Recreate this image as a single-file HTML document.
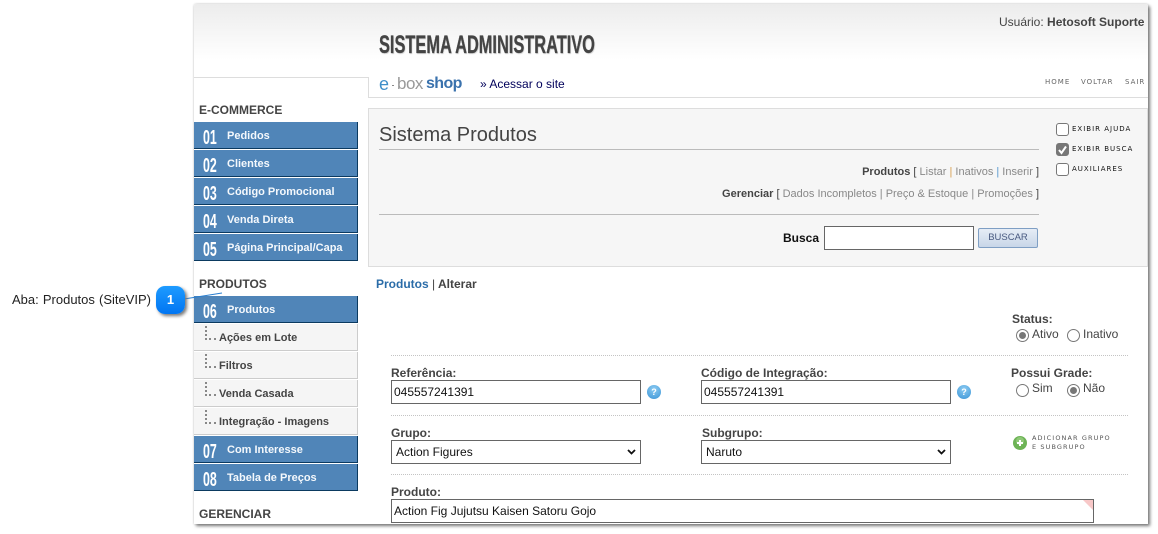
<!DOCTYPE html>
<html><head><meta charset="utf-8">
<style>
html,body{margin:0;padding:0;width:1158px;height:534px;overflow:hidden;background:#fff;font-family:"Liberation Sans",sans-serif;}
.a{position:absolute;}
.t{position:absolute;line-height:14px;white-space:nowrap;font-size:12px;color:#444;}
.b{font-weight:bold;}
.m{position:absolute;left:0;width:163px;height:26px;background:#5085b8;border-bottom:1px solid #0b3a60;border-right:1px solid #0b3a60;}
.m .n{position:absolute;left:9px;top:6px;font-size:20px;line-height:20px;font-weight:bold;color:#fff;transform:scaleX(.62);transform-origin:0 0;}
.m .l{position:absolute;left:33px;top:7px;font-size:11px;line-height:14px;font-weight:bold;color:#f4f8fc;white-space:nowrap;}
.s{position:absolute;left:0;width:163px;height:26px;background:#f5f5f5;border-bottom:1px solid #ccc;border-right:1px solid #ccc;}
.s .l{position:absolute;left:25px;top:7px;font-size:11px;line-height:14px;font-weight:bold;color:#444;white-space:nowrap;}
.s i{position:absolute;left:11px;top:2px;height:14px;border-left:2px dotted #888;}
.s u{position:absolute;left:15px;top:14px;width:7px;border-top:2px dotted #888;}
.h{position:absolute;left:5px;font-size:12px;line-height:14px;font-weight:bold;color:#444;}
.in{position:absolute;box-sizing:border-box;height:24px;border:1px solid #666;background:#fff;font-size:12px;line-height:22px;color:#111;padding-left:2px;white-space:nowrap;}
.dot{position:absolute;left:391px;width:737px;border-top:1px dotted #c4c4c4;}
.px{position:absolute;font-family:"DejaVu Sans",sans-serif;font-size:7px;line-height:9px;white-space:nowrap;letter-spacing:1px;}
.cb{position:absolute;left:1056px;width:13px;height:13px;box-sizing:border-box;border:1px solid #777;border-radius:3px;background:#fff;}
.r{position:absolute;width:13px;height:13px;box-sizing:border-box;border:1px solid #777;border-radius:50%;background:#fff;}
.r.on::after{content:"";position:absolute;left:2px;top:2px;width:7px;height:7px;border-radius:50%;background:#777;}
.help{position:absolute;width:14px;height:14px;border-radius:50%;background:radial-gradient(circle at 50% 30%,#8ccbf2,#3a94d6);color:#fff;font-size:9px;font-weight:bold;line-height:14px;text-align:center;}
.ar{position:absolute;width:9px;height:6px;}
</style></head>
<body>
<div class="a" style="left:194px;top:4px;width:954px;height:520px;background:#fff;box-shadow:2px 2px 3px #777,0 0 2px #ccc;border-radius:2px 2px 0 0;overflow:hidden;">
  <div class="a" style="left:0;top:0;width:954px;height:56px;background:linear-gradient(#ececec,#fff);"></div>
</div>

<div class="t b" style="left:379px;top:33px;font-size:25px;line-height:25px;color:#444;transform:scaleX(.655);transform-origin:0 0;text-shadow:1px 1px 1px #ccc;-webkit-text-stroke:.3px #444;">SISTEMA ADMINISTRATIVO</div>
<div class="t" style="left:999px;top:15px;color:#444;">Usuário: <span class="b">Hetosoft Suporte</span></div>

<div class="a" style="left:194px;top:77px;width:175px;height:1px;background:#ddd;"></div>
<div class="a" style="left:368px;top:77px;width:1px;height:21px;background:#ddd;"></div>
<div class="a" style="left:368px;top:97px;width:780px;height:1px;background:#ddd;"></div>

<div class="t" style="left:379px;top:75px;font-size:18px;line-height:18px;color:#3f8fc9;">e</div>
<div class="a" style="left:392px;top:85px;width:2px;height:1px;background:#888;"></div>
<div class="t" style="left:397px;top:75px;font-size:17px;line-height:18px;color:#999;letter-spacing:-.5px;">box</div>
<div class="t b" style="left:426px;top:75px;font-size:16px;line-height:18px;color:#3a72ad;letter-spacing:-.6px;">shop</div>
<div class="t" style="left:480px;top:77px;color:#00005a;">» Acessar o site</div>

<div class="px" style="left:1045px;top:78px;color:#666;">HOME</div>
<div class="px" style="left:1081px;top:78px;color:#666;">VOLTAR</div>
<div class="px" style="left:1125px;top:78px;color:#666;">SAIR</div>

<div class="a" style="left:368px;top:108px;width:778px;height:157px;background:#f6f6f6;border:1px solid #ddd;"></div>
<div class="t" style="left:379px;top:123px;font-size:20px;line-height:24px;color:#444;">Sistema Produtos</div>
<div class="a" style="left:379px;top:149px;width:660px;height:1px;background:#bbb;"></div>
<div class="a" style="left:379px;top:214px;width:660px;height:1px;background:#bbb;"></div>
<div class="t" style="right:119px;top:165px;font-size:11px;color:#888;"><span class="b" style="color:#444;">Produtos</span> <span style="color:#444;">[</span> Listar <span style="color:#d8a050;">|</span> Inativos <span style="color:#5a9ad0;">|</span> Inserir <span style="color:#444;">]</span></div>
<div class="t" style="right:119px;top:187px;font-size:11px;color:#888;"><span class="b" style="color:#444;">Gerenciar</span> <span style="color:#444;">[</span> Dados Incompletos | Preço &amp; Estoque | Promoções <span style="color:#444;">]</span></div>
<div class="t b" style="left:783px;top:231px;color:#111;">Busca</div>
<div class="in" style="left:824px;top:226px;width:150px;"></div>
<div class="a" style="left:978px;top:228px;width:60px;height:20px;box-sizing:border-box;border:1px solid #7f9fc4;border-radius:2px;background:linear-gradient(#e6edf6,#c8d6e8);color:#4a5a80;font-size:9.5px;line-height:18px;text-align:center;">BUSCAR</div>

<div class="cb" style="top:123px;"></div>
<div class="cb" style="top:143px;background:#777;"><svg width="11" height="11" style="position:absolute;left:0;top:0"><path d="M2 6l2.5 3L9 2.5" stroke="#fff" stroke-width="2" fill="none"/></svg></div>
<div class="cb" style="top:163px;"></div>
<div class="px" style="left:1072px;top:125px;color:#111;">EXIBIR AJUDA</div>
<div class="px" style="left:1072px;top:145px;color:#111;">EXIBIR BUSCA</div>
<div class="px" style="left:1072px;top:165px;color:#111;">AUXILIARES</div>

<!-- sidebar -->
<div class="a" style="left:194px;top:0;width:164px;height:524px;overflow:hidden;">
  <div class="h" style="top:103px;">E-COMMERCE</div>
  <div class="m" style="top:122px;"><span class="n">01</span><span class="l">Pedidos</span></div>
  <div class="m" style="top:150px;"><span class="n">02</span><span class="l">Clientes</span></div>
  <div class="m" style="top:178px;"><span class="n">03</span><span class="l">Código Promocional</span></div>
  <div class="m" style="top:206px;"><span class="n">04</span><span class="l">Venda Direta</span></div>
  <div class="m" style="top:234px;"><span class="n">05</span><span class="l">Página Principal/Capa</span></div>
  <div class="h" style="top:277px;">PRODUTOS</div>
  <div class="m" style="top:296px;"><span class="n">06</span><span class="l">Produtos</span></div>
  <div class="s" style="top:324px;"><i></i><u></u><span class="l">Ações em Lote</span></div>
  <div class="s" style="top:352px;"><i></i><u></u><span class="l">Filtros</span></div>
  <div class="s" style="top:380px;"><i></i><u></u><span class="l">Venda Casada</span></div>
  <div class="s" style="top:408px;"><i></i><u></u><span class="l">Integração - Imagens</span></div>
  <div class="m" style="top:436px;"><span class="n">07</span><span class="l">Com Interesse</span></div>
  <div class="m" style="top:464px;"><span class="n">08</span><span class="l">Tabela de Preços</span></div>
  <div class="h" style="top:507px;">GERENCIAR</div>
</div>

<!-- content -->
<div class="t b" style="left:376px;top:277px;color:#2a6ca8;">Produtos <span style="font-weight:normal;color:#444;">|</span> <span style="color:#444;">Alterar</span></div>

<div class="t b" style="left:1012px;top:312px;">Status:</div>
<div class="r on" style="left:1016px;top:329px;"></div>
<div class="t" style="left:1032px;top:327px;">Ativo</div>
<div class="r" style="left:1067px;top:329px;"></div>
<div class="t" style="left:1083px;top:327px;">Inativo</div>
<div class="dot" style="top:355px;"></div>

<div class="t b" style="left:391px;top:366px;">Referência:</div>
<div class="in" style="left:391px;top:380px;width:250px;">045557241391</div>
<div class="help" style="left:647px;top:385px;">?</div>
<div class="t b" style="left:701px;top:366px;">Código de Integração:</div>
<div class="in" style="left:701px;top:380px;width:250px;">045557241391</div>
<div class="help" style="left:957px;top:385px;">?</div>
<div class="t b" style="left:1011px;top:366px;">Possui Grade:</div>
<div class="r" style="left:1016px;top:384px;"></div>
<div class="t" style="left:1032px;top:381px;">Sim</div>
<div class="r on" style="left:1067px;top:384px;"></div>
<div class="t" style="left:1083px;top:381px;">Não</div>
<div class="dot" style="top:415px;"></div>

<div class="t b" style="left:391px;top:426px;">Grupo:</div>
<div class="in" style="left:391px;top:440px;width:250px;padding-left:4px;">Action Figures</div>
<svg class="ar" style="left:627px;top:449px;" viewBox="0 0 9 6"><path d="M1 1l3.5 3.5L8 1" stroke="#111" stroke-width="1.8" fill="none"/></svg>
<div class="t b" style="left:702px;top:426px;">Subgrupo:</div>
<div class="in" style="left:701px;top:440px;width:250px;padding-left:4px;">Naruto</div>
<svg class="ar" style="left:937px;top:449px;" viewBox="0 0 9 6"><path d="M1 1l3.5 3.5L8 1" stroke="#111" stroke-width="1.8" fill="none"/></svg>
<svg class="a" style="left:1013px;top:436px;" width="14" height="14" viewBox="0 0 14 14"><circle cx="7" cy="7" r="7" fill="#6db356"/><circle cx="7" cy="5" r="4" fill="#a5d68e" opacity=".6"/><path d="M7 4v6M4 7h6" stroke="#fff" stroke-width="2"/></svg>
<div class="px" style="left:1032px;top:434px;color:#555;font-size:6.5px;letter-spacing:1.1px;">ADICIONAR GRUPO</div>
<div class="px" style="left:1032px;top:443px;color:#555;font-size:6.5px;letter-spacing:1.1px;">E SUBGRUPO</div>
<div class="dot" style="top:474px;"></div>

<div class="t b" style="left:391px;top:485px;">Produto:</div>
<div class="in" style="left:391px;top:499px;width:703px;">Action Fig Jujutsu Kaisen Satoru Gojo</div>
<svg class="a" style="left:1083px;top:500px;" width="10" height="10"><path d="M0 0h10v10z" fill="#f8c8c8"/></svg>

<!-- callout -->
<div class="t" style="left:12px;top:293px;font-size:13px;color:#222;word-spacing:.5px;">Aba: Produtos (SiteVIP)</div>
<svg class="a" style="left:184px;top:290px;" width="42" height="12"><path d="M0 9L38 3" stroke="#2a7fd0" stroke-width="1" fill="none"/></svg>
<div class="a" style="left:156px;top:286px;width:29px;height:28px;border-radius:9px;background:linear-gradient(#1e9bff,#0075f2);box-shadow:2px 2px 3px #777;color:#fff;font-size:13px;font-weight:bold;line-height:28px;text-align:center;">1</div>
</body></html>
